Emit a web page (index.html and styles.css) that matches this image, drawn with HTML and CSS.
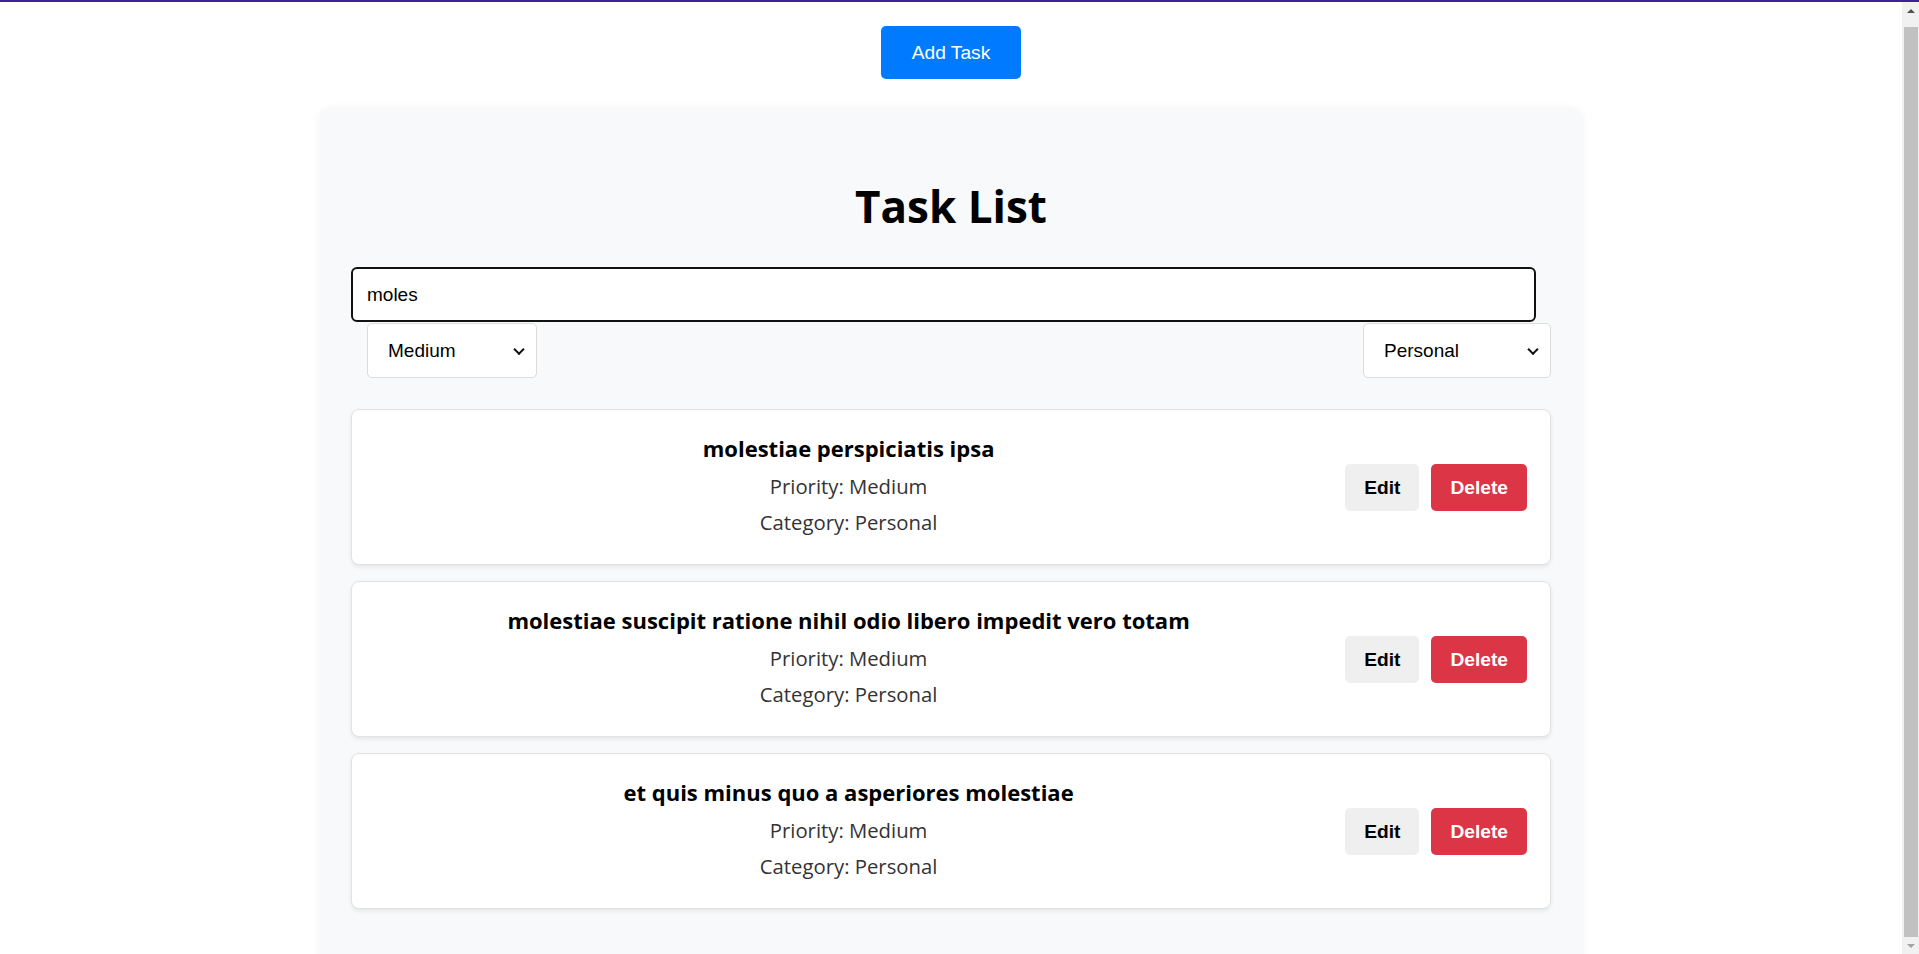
FILE: index.html
```html
<!DOCTYPE html>
<html lang="en">
<head>
<meta charset="utf-8">
<title>Task List</title>
<link rel="stylesheet" href="styles.css">
</head>
<body>
<div class="topbar"></div>
<div class="app">
  <button class="add-btn">Add Task</button>
  <div class="panel">
    <h1 class="panel-title">Task List</h1>
    <input class="search" type="text" value="moles">
    <div class="filters">
      <span class="select-wrap">
        <select class="filter filter-priority">
          <option>Medium</option>
          <option>Low</option>
          <option>High</option>
        </select>
      </span>
      <span class="select-wrap">
        <select class="filter filter-category">
          <option>Personal</option>
          <option>Work</option>
        </select>
      </span>
    </div>
    <div class="tasks">
      <div class="task">
        <div class="task-info">
          <h3 class="task-title">molestiae perspiciatis ipsa</h3>
          <p class="task-meta">Priority: Medium</p>
          <p class="task-meta">Category: Personal</p>
        </div>
        <div class="task-actions">
          <button class="btn btn-edit">Edit</button>
          <button class="btn btn-delete">Delete</button>
        </div>
      </div>
      <div class="task">
        <div class="task-info">
          <h3 class="task-title">molestiae suscipit ratione nihil odio libero impedit vero totam</h3>
          <p class="task-meta">Priority: Medium</p>
          <p class="task-meta">Category: Personal</p>
        </div>
        <div class="task-actions">
          <button class="btn btn-edit">Edit</button>
          <button class="btn btn-delete">Delete</button>
        </div>
      </div>
      <div class="task">
        <div class="task-info">
          <h3 class="task-title">et quis minus quo a asperiores molestiae</h3>
          <p class="task-meta">Priority: Medium</p>
          <p class="task-meta">Category: Personal</p>
        </div>
        <div class="task-actions">
          <button class="btn btn-edit">Edit</button>
          <button class="btn btn-delete">Delete</button>
        </div>
      </div>
    </div>
  </div>
</div>
<div class="scrollbar">
  <div class="scroll-arrow scroll-up"></div>
  <div class="scroll-thumb"></div>
  <div class="scroll-arrow scroll-down"></div>
</div>
</body>
</html>
```

FILE: styles.css
```css
html, body {
  margin: 0;
  padding: 0;
  background: #ffffff;
}

body {
  font-family: "Open Sans", "Noto Sans", sans-serif;
  color: #000;
}

.topbar {
  height: 2px;
  background: #3d239b;
}

.app {
  width: calc(100% - 17px);
  padding-top: 24px;
  padding-bottom: 10px;
}

.add-btn {
  display: block;
  margin: 0 auto;
  padding: 15px 31px;
  border: none;
  border-radius: 5px;
  background: #007bff;
  color: #fff;
  font-family: "Liberation Sans", Arial, sans-serif;
  font-size: 19.2px;
  line-height: 23px;
  cursor: pointer;
}

.panel {
  box-sizing: border-box;
  width: 1262px;
  margin: 30px auto 0;
  padding: 30px 31px 60px;
  background: #f8f9fa;
  border-radius: 10px;
  box-shadow: 0 0 10px rgba(0, 0, 0, 0.06);
}

.panel-title {
  margin: 38px 0 32px;
  text-align: center;
  font-size: 44px;
  line-height: 58px;
  font-weight: 700;
}

.search {
  display: block;
  box-sizing: border-box;
  width: calc(100% - 15px);
  height: 55px;
  margin: 0;
  padding: 0 14px;
  border: 2px solid #111;
  border-radius: 6px;
  background: #fff;
  font-family: "Liberation Sans", Arial, sans-serif;
  font-size: 19px;
  color: #000;
  outline: none;
}

.filters {
  display: flex;
  justify-content: space-between;
  align-items: flex-start;
  padding-left: 16px;
  margin-top: 1px;
}

.select-wrap {
  position: relative;
  display: block;
}

.select-wrap::after {
  content: "";
  position: absolute;
  top: 50%;
  right: 14px;
  width: 8px;
  height: 8px;
  box-sizing: border-box;
  border-right: 2px solid #111;
  border-bottom: 2px solid #111;
  transform: translateY(-70%) rotate(45deg);
  pointer-events: none;
}

.filter {
  display: block;
  box-sizing: border-box;
  height: 55px;
  padding: 0 30px 0 20px;
  border: 1px solid #dcdcdc;
  border-radius: 5px;
  background: #fff;
  font-family: "Liberation Sans", Arial, sans-serif;
  font-size: 19px;
  color: #000;
  -webkit-appearance: none;
  appearance: none;
}

.filter-priority {
  width: 170px;
}

.filter-category {
  width: 188px;
}

.tasks {
  display: flex;
  flex-direction: column;
  gap: 16px;
  margin-top: 31px;
}

.task {
  display: flex;
  align-items: center;
  box-sizing: border-box;
  height: 156px;
  padding: 0 23px 0 20px;
  background: #fff;
  border: 1px solid #e2e2e2;
  border-radius: 8px;
  box-shadow: 0 2px 4px rgba(0, 0, 0, 0.08);
}

.task-info {
  flex: 1;
  text-align: center;
  padding-bottom: 6px;
}

.task-title {
  margin: 0 0 8px;
  font-size: 22px;
  line-height: 32px;
  font-weight: 700;
}

.task-meta {
  margin: 0;
  font-size: 20.3px;
  line-height: 28px;
  color: #333;
}

.task-meta + .task-meta {
  margin-top: 8px;
}

.task-actions {
  display: flex;
  gap: 12px;
  margin-left: 20px;
}

.btn {
  padding: 12px 19px;
  border: none;
  border-radius: 5px;
  font-family: "Liberation Sans", Arial, sans-serif;
  font-size: 19.2px;
  line-height: 23px;
  font-weight: 700;
  cursor: pointer;
}

.btn-edit {
  background: #efefef;
  color: #000;
}

.btn-delete {
  background: #dc3545;
  color: #fff;
}

.scrollbar {
  position: fixed;
  top: 2px;
  right: 0;
  bottom: 0;
  width: 17px;
  display: flex;
  flex-direction: column;
  background: #f1f1f1;
}

.scroll-arrow {
  height: 17px;
  display: flex;
  align-items: center;
  justify-content: center;
}

.scroll-arrow::before {
  content: "";
  border-left: 4px solid transparent;
  border-right: 4px solid transparent;
}

.scroll-up::before {
  border-bottom: 4px solid #505050;
}

.scroll-down::before {
  border-top: 4px solid #a3a3a3;
}

.scroll-thumb {
  flex: 1;
  margin: 8px 1px 0 2px;
  background: #c1c1c1;
}
```
